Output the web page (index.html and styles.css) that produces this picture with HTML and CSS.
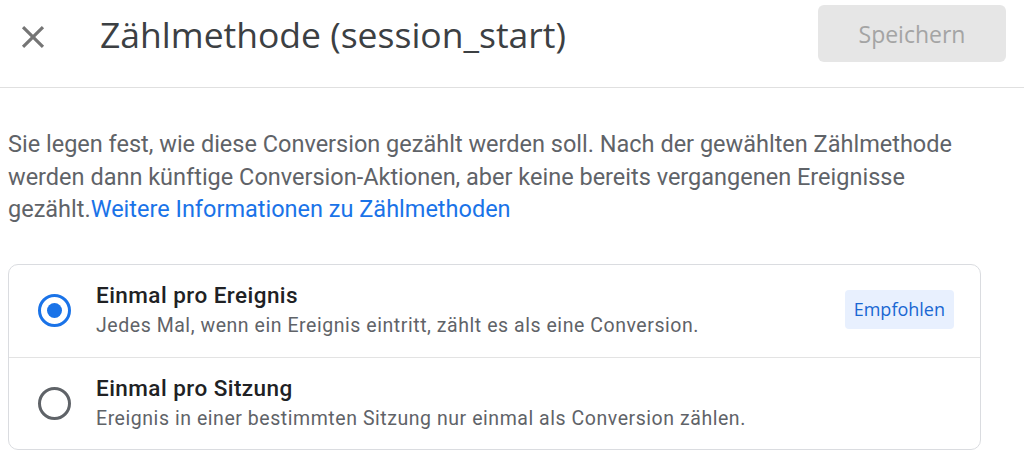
FILE: index.html
```html
<!DOCTYPE html>
<html lang="de">
<head>
  <meta charset="UTF-8">
  <meta name="viewport" content="width=device-width, initial-scale=1.0">
  <title>Zählmethode</title>
  <link rel="stylesheet" href="styles.css">
</head>
<body>
  <!-- Header -->
  <header class="header">
    <button class="close-btn" aria-label="Schließen">
      <svg viewBox="0 0 24 24">
        <path d="M19 6.41 17.59 5 12 10.59 6.41 5 5 6.41 10.59 12 5 17.59 6.41 19 12 13.41 17.59 19 19 17.59 13.41 12z" fill="#757575"/>
      </svg>
    </button>
    <h1 class="title">Zählmethode (session_start)</h1>
    <button class="save-btn" disabled>Speichern</button>
  </header>

  <main class="content">
    <p class="intro">
      Sie legen fest, wie diese Conversion gezählt werden soll. Nach der gewählten Zählmethode
      werden dann künftige Conversion-Aktionen, aber keine bereits vergangenen Ereignisse
      gezählt.<a href="#" class="link">Weitere Informationen zu Zählmethoden</a>
    </p>

    <!-- Options -->
    <div class="options">
      <label class="option">
        <span class="radio checked"></span>
        <span class="option-text">
          <span class="option-title">Einmal pro Ereignis</span>
          <span class="option-desc">Jedes Mal, wenn ein Ereignis eintritt, zählt es als eine Conversion.</span>
        </span>
        <span class="badge">Empfohlen</span>
      </label>
      <label class="option">
        <span class="radio"></span>
        <span class="option-text">
          <span class="option-title">Einmal pro Sitzung</span>
          <span class="option-desc">Ereignis in einer bestimmten Sitzung nur einmal als Conversion zählen.</span>
        </span>
      </label>
    </div>
  </main>
</body>
</html>
```

FILE: styles.css
```css
body {
  margin: 0;
  font-family: Roboto, "Liberation Sans", Arial, sans-serif;
  color: #202124;
  background: #fff;
}
.header {
  display: flex;
  align-items: center;
  height: 88px;
  border-bottom: 1px solid #e0e0e0;
  padding: 0 18px 20px 14px;
  box-sizing: border-box;
}
.close-btn {
  width: 38px;
  height: 38px;
  padding: 0;
  border: none;
  background: none;
  display: flex;
  margin-right: 48px;
  margin-top: 7px;
}
.close-btn svg {
  width: 38px;
  height: 38px;
}
.title {
  flex: 1;
  margin: 0;
  font-family: "Open Sans", Roboto, sans-serif;
  font-weight: 400;
  font-size: 35.5px;
  color: #3c4043;
}
.save-btn {
  width: 188px;
  height: 57px;
  margin-top: 0;
  border: none;
  border-radius: 6px;
  background: #e6e6e6;
  color: #a4a4a4;
  font-family: "Open Sans", Roboto, sans-serif;
  font-size: 23px;
  font-weight: 500;
}
.content {
  padding: 0 43px 0 8px;
}
.intro {
  margin: 40px 0 0;
  font-size: 23.5px;
  line-height: 32.5px;
  color: #5f6368;
}
.link {
  color: #1a73e8;
  text-decoration: none;
}
.options {
  margin-top: 38px;
  border: 1px solid #dadce0;
  border-radius: 10px;
}
.option {
  display: flex;
  align-items: center;
  height: 92px;
  padding: 0 26px 0 29px;
  box-sizing: border-box;
}
.option + .option {
  border-top: 1px solid #e3e3e3;
}
.radio {
  width: 33px;
  height: 33px;
  border: 3.5px solid #5f6368;
  border-radius: 50%;
  box-sizing: border-box;
  display: flex;
  align-items: center;
  justify-content: center;
  margin-right: 25px;
}
.radio.checked {
  border-color: #1a73e8;
}
.radio.checked::after {
  content: "";
  width: 15px;
  height: 15px;
  border-radius: 50%;
  background: #1a73e8;
}
.option-text {
  flex: 1;
  display: flex;
  flex-direction: column;
}
.option-title {
  font-size: 22.5px;
  font-weight: 500;
  color: #202124;
  line-height: 30px;
  letter-spacing: 0.45px;
}
.option-desc {
  font-size: 19.5px;
  color: #5f6368;
  line-height: 31px;
  letter-spacing: 0.55px;
}
.badge {
  background: #e8f0fe;
  color: #1967d2;
  font-family: "Open Sans", Roboto, sans-serif;
  font-size: 18px;
  padding: 0 9px;
  height: 39px;
  line-height: 39px;
  border-radius: 4px;
  margin-top: -2px;
}
```
